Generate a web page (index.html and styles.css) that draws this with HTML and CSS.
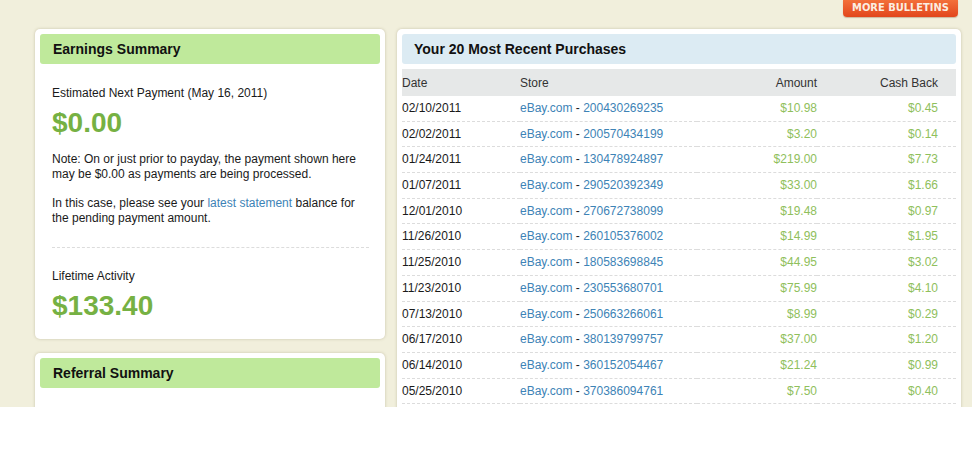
FILE: index.html
```html
<!DOCTYPE html>
<html>
<head>
<meta charset="utf-8">
<link rel="stylesheet" href="styles.css">
</head>
<body>
<div class="page">
  <div class="topbar">
    <a class="bulletins" href="#">MORE BULLETINS</a>
  </div>
  <div class="main">
    <div class="leftcol">
      <div class="card card-left">
        <div class="card-head green">Earnings Summary</div>
        <div class="card-body">
          <p class="label">Estimated Next Payment (May 16, 2011)</p>
          <div class="big">$0.00</div>
          <p class="note">Note: On or just prior to payday, the payment shown here may be $0.00 as payments are being processed.</p>
          <p class="note">In this case, please see your <a href="#">latest statement</a> balance for the pending payment amount.</p>
          <div class="sep"></div>
          <p class="label">Lifetime Activity</p>
          <div class="big">$133.40</div>
        </div>
      </div>
      <div class="card card-left card-ref">
        <div class="card-head green">Referral Summary</div>
      </div>
    </div>
    <div class="card card-right">
      <div class="card-head blue">Your 20 Most Recent Purchases</div>
      <table class="purchases">
        <thead>
          <tr><th class="c-date">Date</th><th class="c-store">Store</th><th class="c-amt">Amount</th><th class="c-cb">Cash Back</th></tr>
        </thead>
        <tbody>
          <tr><td class="c-date">02/10/2011</td><td class="c-store"><a href="#">eBay.com</a> - <a href="#">200430269235</a></td><td class="c-amt">$10.98</td><td class="c-cb">$0.45</td></tr>
          <tr><td class="c-date">02/02/2011</td><td class="c-store"><a href="#">eBay.com</a> - <a href="#">200570434199</a></td><td class="c-amt">$3.20</td><td class="c-cb">$0.14</td></tr>
          <tr><td class="c-date">01/24/2011</td><td class="c-store"><a href="#">eBay.com</a> - <a href="#">130478924897</a></td><td class="c-amt">$219.00</td><td class="c-cb">$7.73</td></tr>
          <tr><td class="c-date">01/07/2011</td><td class="c-store"><a href="#">eBay.com</a> - <a href="#">290520392349</a></td><td class="c-amt">$33.00</td><td class="c-cb">$1.66</td></tr>
          <tr><td class="c-date">12/01/2010</td><td class="c-store"><a href="#">eBay.com</a> - <a href="#">270672738099</a></td><td class="c-amt">$19.48</td><td class="c-cb">$0.97</td></tr>
          <tr><td class="c-date">11/26/2010</td><td class="c-store"><a href="#">eBay.com</a> - <a href="#">260105376002</a></td><td class="c-amt">$14.99</td><td class="c-cb">$1.95</td></tr>
          <tr><td class="c-date">11/25/2010</td><td class="c-store"><a href="#">eBay.com</a> - <a href="#">180583698845</a></td><td class="c-amt">$44.95</td><td class="c-cb">$3.02</td></tr>
          <tr><td class="c-date">11/23/2010</td><td class="c-store"><a href="#">eBay.com</a> - <a href="#">230553680701</a></td><td class="c-amt">$75.99</td><td class="c-cb">$4.10</td></tr>
          <tr><td class="c-date">07/13/2010</td><td class="c-store"><a href="#">eBay.com</a> - <a href="#">250663266061</a></td><td class="c-amt">$8.99</td><td class="c-cb">$0.29</td></tr>
          <tr><td class="c-date">06/17/2010</td><td class="c-store"><a href="#">eBay.com</a> - <a href="#">380139799757</a></td><td class="c-amt">$37.00</td><td class="c-cb">$1.20</td></tr>
          <tr><td class="c-date">06/14/2010</td><td class="c-store"><a href="#">eBay.com</a> - <a href="#">360152054467</a></td><td class="c-amt">$21.24</td><td class="c-cb">$0.99</td></tr>
          <tr><td class="c-date">05/25/2010</td><td class="c-store"><a href="#">eBay.com</a> - <a href="#">370386094761</a></td><td class="c-amt">$7.50</td><td class="c-cb">$0.40</td></tr>
        </tbody>
      </table>
    </div>
  </div>
</div>
</body>
</html>
```

FILE: styles.css
```css
html, body {
  margin: 0;
  padding: 0;
  background: #ffffff;
}
body {
  font-family: "Liberation Sans", Arial, sans-serif;
  font-size: 12px;
  color: #1a1a1a;
}
.page {
  height: 407px;
  overflow: hidden;
  background: #f1efdc;
}
.topbar {
  height: 17px;
  display: flex;
  justify-content: flex-end;
  padding-right: 14px;
}
.bulletins {
  display: block;
  width: 115px;
  height: 17px;
  box-sizing: border-box;
  text-align: center;
  line-height: 16px;
  font-family: "DejaVu Sans Condensed", "DejaVu Sans", sans-serif;
  font-weight: bold;
  font-size: 11px;
  color: #fbeee2;
  text-decoration: none;
  background: linear-gradient(#f3703a, #e2461c);
  border-radius: 0 0 4px 4px;
  box-shadow: 0 1px 1px rgba(120, 60, 20, 0.3);
}
.main {
  display: flex;
  align-items: flex-start;
  gap: 12px;
  padding: 12px 11px 0 35px;
}
.leftcol {
  display: flex;
  flex-direction: column;
  gap: 14px;
  width: 350px;
  flex: none;
}
.card {
  background: #ffffff;
  border-radius: 5px;
  padding: 5px;
  box-shadow: 0 0 3px rgba(120, 110, 70, 0.35);
}
.card-left {
  width: 350px;
  box-sizing: border-box;
}
.card-ref {
  height: 120px;
}
.card-right {
  flex: 1;
  height: 420px;
}
.card-head {
  height: 30px;
  line-height: 30px;
  padding-left: 13px;
  border-radius: 3px;
  font-weight: bold;
  font-size: 14px;
  color: #111;
}
.green {
  background: #bfe99b;
}
.blue {
  background: #dcebf3;
  padding-left: 12px;
}
.card-body {
  padding: 22px 11px 13px 12px;
}
.card-body p {
  margin: 0;
  line-height: 15px;
}
.label {
  color: #1a1a1a;
}
.big {
  margin-top: 7px;
  font-size: 28px;
  line-height: 30px;
  font-weight: bold;
  color: #76b143;
}
.card-body .note {
  margin-top: 14px;
}
.card-body a {
  color: #3d83b6;
  text-decoration: none;
}
.sep {
  border-top: 1px dashed #dcdcdc;
  margin: 21px 0 21px 0;
}
.purchases {
  width: 100%;
  margin-top: 5px;
  border-collapse: collapse;
  font-size: 12px;
}
.purchases th {
  background: #e6e8e8;
  font-weight: normal;
  color: #333;
  height: 26px;
  padding: 1px 0 0 0;
  line-height: 15px;
  text-align: left;
}
.purchases td {
  padding: 5px 0 4.7px 0;
  line-height: 15px;
  border-bottom: 1px dashed #dcdcdc;
  color: #1a1a1a;
}
.c-date {
  width: 118px;
}
.purchases .c-amt {
  text-align: right;
  width: 120px;
}
.purchases .c-cb {
  text-align: right;
  width: 121px;
  padding-right: 18px;
}
.purchases td.c-amt,
.purchases td.c-cb {
  color: #8fc05c;
}
.purchases a {
  color: #3d83b6;
  text-decoration: none;
}
```
